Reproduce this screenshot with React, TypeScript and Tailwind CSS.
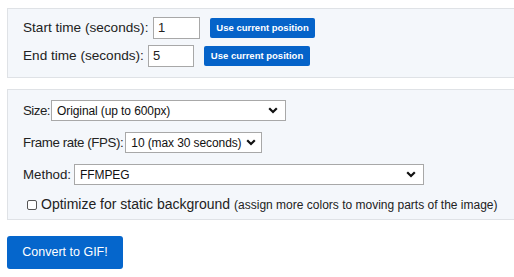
import React from 'react';

const chevron = (
  <svg width="10" height="7" viewBox="0 0 10 7" className="ml-[4px] shrink-0">
    <path d="M1.2 1.2 L5 5 L8.8 1.2" fill="none" stroke="#111" strokeWidth="2.2" />
  </svg>
);

function Select({ value, width }: { value: string; width: string }) {
  return (
    <div className={`flex h-[21px] shrink-0 items-center justify-between border border-[#a8a8a8] bg-white pl-[5px] pr-[7px] text-[12px] tracking-[-0.1px] whitespace-nowrap text-[#111] ${width}`}>
      <span>{value}</span>
      {chevron}
    </div>
  );
}

export default function App() {
  return (
    <div className="h-[277px] w-[514px] overflow-hidden bg-white pl-[7px] pt-[8px] text-[#222]" style={{ fontFamily: '"Liberation Sans", Arial, sans-serif' }}>
      <div className="flex h-[70px] w-[520px] flex-col gap-[6px] border border-[#dfe2e6] bg-[#f4f7fb] pl-[15px] pt-[8px] text-[13.6px]">
        <div className="flex h-[22px] items-center whitespace-nowrap">
          <span className="w-[130px]">Start time (seconds):</span>
          <div className="flex h-[22px] w-[47px] items-center border border-[#a8a8a8] bg-white px-[4px] text-[13px]">1</div>
          <button className="ml-[10px] h-[20px] w-[105px] rounded-[2px] bg-[#0563c9] text-[9.5px] font-bold text-white">Use current position</button>
        </div>
        <div className="flex h-[22px] items-center whitespace-nowrap">
          <span className="w-[125px]">End time (seconds):</span>
          <div className="flex h-[22px] w-[46px] items-center border border-[#a8a8a8] bg-white px-[4px] text-[13px]">5</div>
          <button className="ml-[10px] h-[20px] w-[106px] rounded-[2px] bg-[#0563c9] text-[9.5px] font-bold text-white">Use current position</button>
        </div>
      </div>

      <div className="mt-[11px] flex h-[131px] w-[520px] flex-col border border-[#dfe2e6] bg-[#f4f7fb] pl-[15px] pt-[10px] text-[13.3px]">
        <div className="flex h-[21px] items-center whitespace-nowrap">
          <span className="mr-[1px] tracking-[-0.5px]">Size:</span>
          <Select value="Original (up to 600px)" width="w-[235px]" />
        </div>
        <div className="mt-[11px] flex h-[21px] items-center whitespace-nowrap">
          <span className="mr-[2px] tracking-[-0.4px]">Frame rate (FPS):</span>
          <Select value="10 (max 30 seconds)" width="w-[137px]" />
        </div>
        <div className="mt-[11px] flex h-[21px] items-center whitespace-nowrap">
          <span className="mr-[3px]">Method:</span>
          <Select value="FFMPEG" width="w-[350px]" />
        </div>
        <label className="mt-[9px] flex items-center whitespace-nowrap pl-[4px]">
          <span className="mr-[4px] h-[10px] w-[10px] rounded-[2px] border border-[#555] bg-white" />
          <span className="text-[14px]">Optimize for static background</span>
          <span className="ml-[4px] text-[12px]">(assign more colors to moving parts of the image)</span>
        </label>
      </div>

      <button className="mt-[16px] h-[33px] w-[116px] rounded-[3px] bg-[#0566cc] text-[12.5px] text-white">Convert to GIF!</button>
    </div>
  );
}
